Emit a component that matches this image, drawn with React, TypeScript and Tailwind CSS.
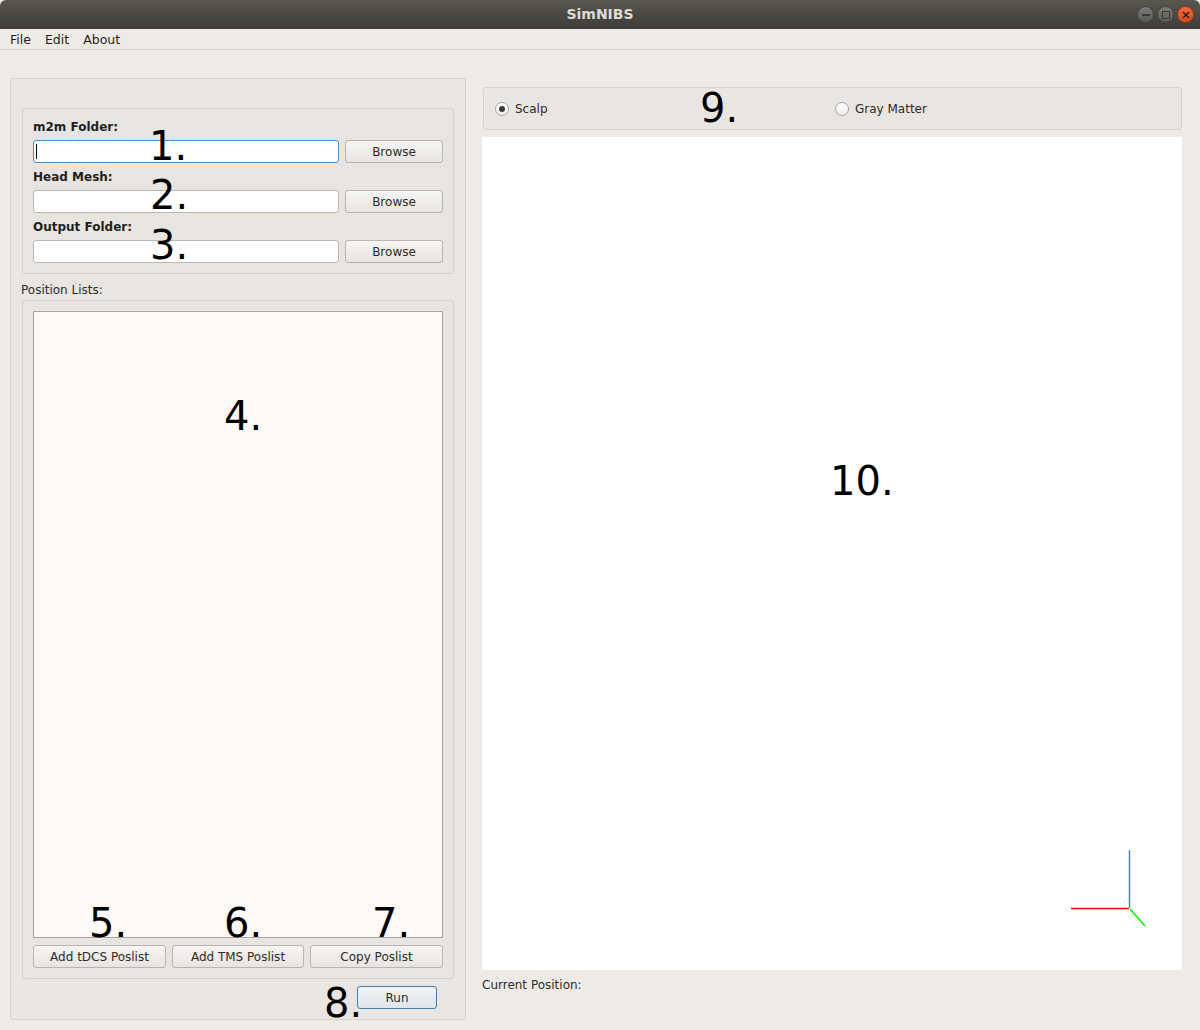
import React from "react";

const font = { fontFamily: '"DejaVu Sans", "Liberation Sans", sans-serif' };

// big annotation numbers laid over the window (page coordinates)
const marks = [
  { t: "1.", x: 149, y: 126 },
  { t: "2.", x: 150, y: 175 },
  { t: "3.", x: 150, y: 225 },
  { t: "4.", x: 224, y: 396 },
  { t: "5.", x: 89, y: 903 },
  { t: "6.", x: 224, y: 903 },
  { t: "7.", x: 372, y: 903 },
  { t: "8.", x: 324, y: 983 },
  { t: "9.", x: 700, y: 88 },
  { t: "10.", x: 830, y: 461 },
];

const Btn = ({ label, className = "" }: { label: string; className?: string }) => (
  <button
    className={
      "h-[23px] rounded-[3px] border border-[#b9b4ad] bg-gradient-to-b from-[#f7f6f5] to-[#e7e4e0] text-[12px] text-[#2b2b2b] " +
      className
    }
  >
    {label}
  </button>
);

const PathRow = ({ label, focused }: { label: string; focused?: boolean }) => (
  <>
    <div className="flex h-[17px] items-center text-[12px] font-bold text-[#1f1f1f]">{label}</div>
    <div className="mt-[5px] mb-[5px] flex gap-[6px]">
      <div
        className={
          "relative h-[23px] w-[306px] rounded-[3px] border bg-white " +
          (focused ? "border-[#4a8fc7]" : "border-[#bdb8b1]")
        }
      >
        {focused && <div className="absolute left-[2px] top-[3px] h-[15px] w-px bg-black" />}
      </div>
      <Btn label="Browse" className="w-[98px]" />
    </div>
  </>
);

const Radio = ({ label, checked }: { label: string; checked?: boolean }) => (
  <div className="flex items-center gap-[6px] text-[12px] text-[#2b2b2b]">
    <div className="flex h-[14px] w-[14px] items-center justify-center rounded-full border border-[#a9a49d] bg-gradient-to-b from-white to-[#eeeeee]">
      {checked && <div className="h-[6px] w-[6px] rounded-full bg-[#3a3a3a]" />}
    </div>
    <span>{label}</span>
  </div>
);

export default function App() {
  return (
    <div className="relative h-[1030px] w-[1200px] overflow-hidden bg-[#eeebe7]" style={font}>
      {/* title bar */}
      <div className="relative flex h-[29px] items-center justify-center rounded-t-[6px] bg-gradient-to-b from-[#5a5750] to-[#3d3c37]">
        <span className="text-[14px] font-bold text-[#dfdbd2]">SimNIBS</span>
        <div className="absolute right-[6px] top-[6px] flex gap-[3px]">
          <div className="flex h-[17px] w-[17px] items-center justify-center rounded-full border border-[#45433e] bg-gradient-to-b from-[#7d7b75] to-[#5b5954]">
            <div className="h-[2px] w-[8px] bg-[#3a3935]" />
          </div>
          <div className="flex h-[17px] w-[17px] items-center justify-center rounded-full border border-[#45433e] bg-gradient-to-b from-[#7d7b75] to-[#5b5954]">
            <div className="h-[8px] w-[8px] border-[1.5px] border-[#3a3935]" />
          </div>
          <div className="flex h-[17px] w-[17px] items-center justify-center rounded-full border border-[#9a3a17] bg-gradient-to-b from-[#f26a3a] to-[#d84a1a]">
            <svg width="8" height="8" viewBox="0 0 8 8">
              <path d="M1 1L7 7M7 1L1 7" stroke="#3a2018" strokeWidth="1.6" />
            </svg>
          </div>
        </div>
      </div>

      {/* menu bar */}
      <div className="flex h-[21px] items-center gap-[14px] border-b border-[#d6d2cd] pl-[10px] pt-[2px] text-[12.5px] text-[#1f1f1f]">
        <span>File</span>
        <span>Edit</span>
        <span>About</span>
      </div>

      <div className="flex gap-[16px] pl-[10px]">
        {/* left column */}
        <div className="mt-[28px] flex h-[942px] w-[456px] flex-col rounded-[3px] border border-[#d7d3ce] bg-[#e9e6e2] px-[11px] pt-[29px]">
          <div className="flex flex-col rounded-[3px] border border-[#d5d1cc] bg-[#e8e5e1] px-[10px] pt-[9px] pb-[5px]">
            <PathRow label="m2m Folder:" focused />
            <PathRow label="Head Mesh:" />
            <PathRow label="Output Folder:" />
          </div>
          <div className="flex h-[26px] items-center pt-[6px] text-[12px] text-[#2b2b2b]">
            <span className="-ml-[1px]">Position Lists:</span>
          </div>
          <div className="flex flex-col rounded-[3px] border border-[#d5d1cc] bg-[#e8e5e1] p-[10px]">
            <div className="h-[627px] border border-[#a9a49e] bg-[#fcf9f6]" />
            <div className="mt-[7px] flex gap-[6px]">
              <Btn label="Add tDCS Poslist" className="w-[133px]" />
              <Btn label="Add TMS Poslist" className="w-[132px]" />
              <Btn label="Copy Poslist" className="w-[133px]" />
            </div>
          </div>
          <div className="mt-[7px] flex justify-end pr-[17px]">
            <button className="h-[23px] w-[80px] rounded-[3px] border border-[#3f7fb3] bg-gradient-to-b from-[#f1f4f7] to-[#dfe5ea] text-[12px] text-[#2b2b2b]">
              Run
            </button>
          </div>
        </div>

        {/* right column */}
        <div className="flex w-[700px] flex-col pt-[37px]">
          <div className="ml-[1px] flex h-[43px] items-center rounded-[3px] border border-[#d5d1cc] bg-[#e9e6e2] pl-[11px]">
            <div className="w-[340px]">
              <Radio label="Scalp" checked />
            </div>
            <Radio label="Gray Matter" />
          </div>
          <div className="relative mt-[7px] h-[833px] bg-white">
            <svg className="absolute left-[588px] top-[712px]" width="80" height="80" viewBox="0 0 80 80">
              <line x1="59.5" y1="1" x2="59.5" y2="59" stroke="#4a7ff0" strokeWidth="1.5" />
              <line x1="1" y1="59.5" x2="59" y2="59.5" stroke="#ff0000" strokeWidth="1.5" />
              <line x1="60" y1="60" x2="75" y2="77" stroke="#00ee00" strokeWidth="1.5" />
            </svg>
          </div>
          <div className="flex h-[28px] items-center pt-[2px] text-[12px] text-[#2b2b2b]">Current Position:</div>
        </div>
      </div>

      {marks.map((m) => (
        <span
          key={m.t}
          className="pointer-events-none absolute text-[40px] leading-none text-black"
          style={{ left: m.x, top: m.y }}
        >
          {m.t}
        </span>
      ))}
    </div>
  );
}
